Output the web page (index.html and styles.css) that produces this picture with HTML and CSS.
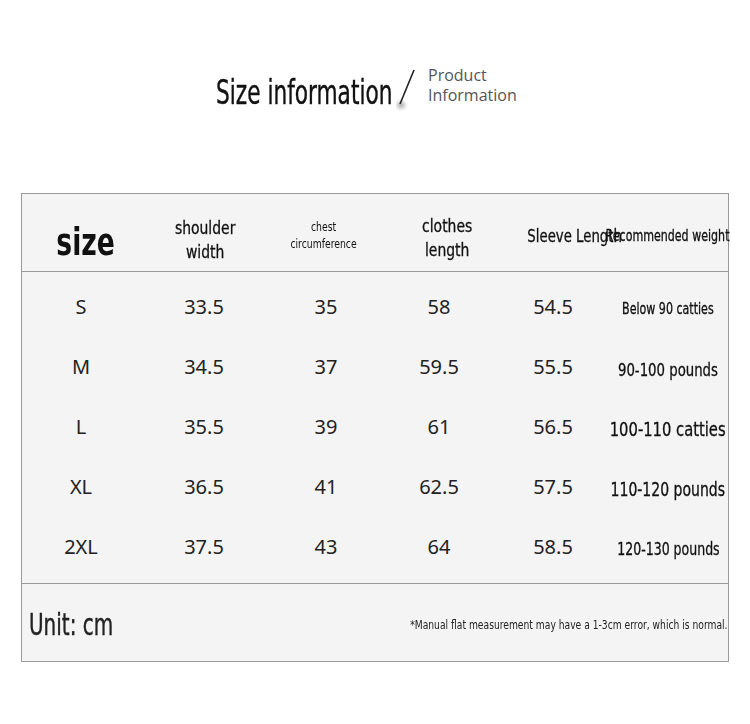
FILE: index.html
```html
<!DOCTYPE html>
<html>
<head>
<meta charset="utf-8">
<link rel="stylesheet" href="styles.css">
</head>
<body>
<div class="page">
  <div class="title">
    <span class="title-main">Size information</span>
    <svg class="slash" width="24" height="48" viewBox="0 0 24 48">
      <defs>
        <filter id="blur" x="-50%" y="-50%" width="200%" height="200%"><feGaussianBlur stdDeviation="2"/></filter>
      </defs>
      <ellipse cx="5" cy="37" rx="3.5" ry="3" fill="#999" filter="url(#blur)"/>
      <line x1="18" y1="2" x2="4" y2="36" stroke="#222" stroke-width="1.6"/>
    </svg>
    <span class="title-sub">Product<br>Information</span>
  </div>

  <div class="table">
    <div class="thead">
      <div class="h h-size"><span class="n">size</span></div>
      <div class="h h-md"><span class="n">shoulder<br>width</span></div>
      <div class="h h-sm"><span class="n">chest<br>circumference</span></div>
      <div class="h h-md h-clothes"><span class="n">clothes<br>length</span></div>
      <div class="h h-md h-sleeve"><span class="n">Sleeve Length</span></div>
      <div class="h h-rw"><span class="n">Recommended weight</span></div>
    </div>
    <div class="tbody">
      <div class="row"><span class="c">S</span><span class="c">33.5</span><span class="c">35</span><span class="c">58</span><span class="c">54.5</span><span class="w w15"><span class="n">Below 90 catties</span></span></div>
      <div class="row"><span class="c">M</span><span class="c">34.5</span><span class="c">37</span><span class="c">59.5</span><span class="c">55.5</span><span class="w w17"><span class="n">90-100 pounds</span></span></div>
      <div class="row"><span class="c">L</span><span class="c">35.5</span><span class="c">39</span><span class="c">61</span><span class="c">56.5</span><span class="w w19"><span class="n">100-110 catties</span></span></div>
      <div class="row"><span class="c">XL</span><span class="c">36.5</span><span class="c">41</span><span class="c">62.5</span><span class="c">57.5</span><span class="w w18"><span class="n">110-120 pounds</span></span></div>
      <div class="row"><span class="c">2XL</span><span class="c">37.5</span><span class="c">43</span><span class="c">64</span><span class="c">58.5</span><span class="w w17b"><span class="n">120-130 pounds</span></span></div>
    </div>
    <div class="tfoot">
      <span class="unit">Unit: cm</span>
      <span class="note">*Manual flat measurement may have a 1-3cm error, which is normal.</span>
    </div>
  </div>
</div>
</body>
</html>
```

FILE: styles.css
```css
html, body {
  margin: 0;
  padding: 0;
  background: #ffffff;
}
.page {
  width: 750px;
  height: 724px;
  padding-top: 62px;
  box-sizing: border-box;
}
.n {
  display: inline-block;
  transform: scaleX(0.86);
  transform-origin: center center;
}
.title {
  display: flex;
  align-items: center;
  height: 60px;
  padding-left: 216px;
}
.title-main {
  font-family: "DejaVu Sans Condensed", sans-serif;
  font-size: 33px;
  color: #111;
  display: inline-block;
  transform: scaleX(0.73);
  transform-origin: left center;
  width: 176px;
  white-space: nowrap;
  -webkit-text-stroke: 0.4px #111;
}
.slash {
  margin-left: 4px;
}
.title-sub {
  margin-left: 8px;
  font-family: "Open Sans", sans-serif;
  font-size: 16px;
  line-height: 20px;
  color: #555;
  margin-top: -15px;
}
.table {
  margin: 71px 0 0 21px;
  width: 708px;
  border: 1px solid #9a9a9a;
  box-sizing: border-box;
  background: #f4f4f4;
}
.thead {
  display: grid;
  grid-template-columns: 128px 110px 128px 118px 138px 48px;
  height: 77px;
  border-bottom: 1px solid #9a9a9a;
  align-items: center;
}
.h {
  font-family: "DejaVu Sans Condensed", sans-serif;
  text-align: center;
  color: #111;
  white-space: nowrap;
  display: flex;
  justify-content: center;
  -webkit-text-stroke: 0.3px #111;
}
.h-size {
  font-size: 37px;
  font-weight: bold;
  padding-top: 20px;
  -webkit-text-stroke: 0;
}
.h-size .n {
  transform: scaleX(0.8);
}
.h-md {
  font-size: 18px;
  line-height: 24px;
  padding-top: 14px;
}
.h-clothes {
  padding-top: 10px;
}
.h-sm {
  font-size: 12px;
  line-height: 17px;
  padding-top: 7px;
  -webkit-text-stroke: 0;
}
.h-sleeve {
  padding-top: 6px;
}
.h-sleeve .n {
  transform: scaleX(0.82);
}
.h-rw {
  font-size: 15px;
  padding-top: 6px;
}
.h-rw .n {
  transform: scaleX(0.82);
}
.tbody {
  padding: 4px 0 7px;
}
.row {
  display: grid;
  grid-template-columns: 118px 128px 116px 110px 118px 112px;
  height: 60px;
  align-items: center;
}
.c {
  font-family: "Noto Sans", sans-serif;
  font-size: 20px;
  color: #222;
  text-align: center;
}
.w {
  font-family: "DejaVu Sans Condensed", sans-serif;
  color: #111;
  white-space: nowrap;
  display: flex;
  justify-content: center;
  padding-top: 6px;
  -webkit-text-stroke: 0.3px #111;
}
.w .n {
  transform: scaleX(0.82);
}
.w15 { font-size: 15px; }
.w17 { font-size: 18px; }
.w17b { font-size: 17px; }
.w18 { font-size: 19px; }
.w19 { font-size: 20px; }
.tfoot {
  border-top: 1px solid #9a9a9a;
  height: 78px;
  display: flex;
  align-items: center;
  justify-content: space-between;
  padding: 4px 0 0 7px;
  box-sizing: border-box;
}
.unit {
  font-family: "DejaVu Sans Condensed", sans-serif;
  font-size: 30px;
  color: #222;
  display: inline-block;
  transform: scaleX(0.74);
  transform-origin: left center;
  -webkit-text-stroke: 0.4px #222;
}
.note {
  font-family: "DejaVu Sans Condensed", sans-serif;
  font-size: 12px;
  color: #222;
  display: inline-block;
  transform: scaleX(0.85);
  transform-origin: right center;
  padding-right: 1px;
  white-space: nowrap;
}
```
